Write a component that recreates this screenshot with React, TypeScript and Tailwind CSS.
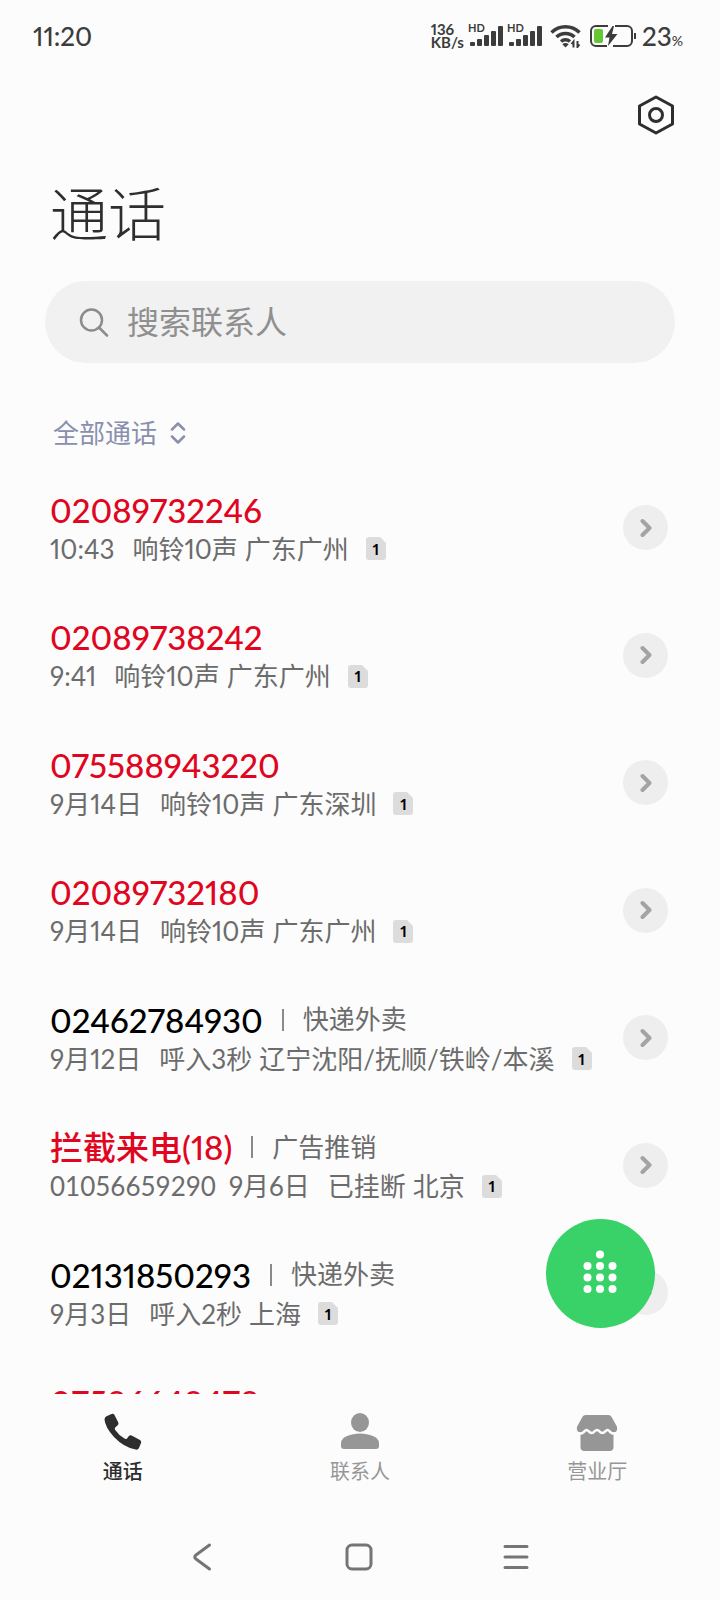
import React, { useState } from "react";

type Call = {
  title: string;
  missed?: boolean;
  tag?: string;
  number?: string;
  time: string;
  status: string;
  place: string;
};

const calls: Call[] = [
  { title: "02089732246", missed: true, time: "10:43", status: "响铃10声", place: "广东广州" },
  { title: "02089738242", missed: true, time: "9:41", status: "响铃10声", place: "广东广州" },
  { title: "075588943220", missed: true, time: "9月14日", status: "响铃10声", place: "广东深圳" },
  { title: "02089732180", missed: true, time: "9月14日", status: "响铃10声", place: "广东广州" },
  { title: "02462784930", tag: "快递外卖", time: "9月12日", status: "呼入3秒", place: "辽宁沈阳/抚顺/铁岭/本溪" },
  { title: "拦截来电(18)", missed: true, tag: "广告推销", number: "01056659290", time: "9月6日", status: "已挂断", place: "北京" },
  { title: "02131850293", tag: "快递外卖", time: "9月3日", status: "呼入2秒", place: "上海" },
  { title: "07586648478", missed: true, time: "", status: "", place: "" },
];

const Signal = () => (
  <span className="relative block h-6 w-[33px]">
    <span className="absolute -top-1 -left-[2px] text-[11px] leading-4 font-bold">HD</span>
    <svg width="33" height="24" viewBox="0 0 33 24" fill="#3c3c3c">
      <rect x="0" y="18" width="5" height="4" rx="1" />
      <rect x="7" y="15" width="5" height="7" rx="1" />
      <rect x="14" y="11" width="5" height="11" rx="1" />
      <rect x="21" y="7" width="5" height="15" rx="1" />
      <rect x="28" y="2" width="5" height="20" rx="1" />
    </svg>
  </span>
);

const Wifi = () => (
  <svg className="mx-[2px]" width="32" height="24" viewBox="0 0 32 24" fill="none" stroke="#3c3c3c" strokeWidth="3.500">
    <path d="M1.500 8.500a20 20 0 0 1 28 0M6.500 13a13 13 0 0 1 18 0M11 17.500a7 7 0 0 1 9 0" />
    <path d="M12.300 20.300a5 5 0 0 1 6.400 0l-3.200 3.200z" fill="#3c3c3c" stroke="none" />
    <path d="M23.500 23.500v-6l-2 2.500M27.500 17v6l2-2.500" strokeWidth="2" />
  </svg>
);

const Battery = () => (
  <svg width="46" height="22" viewBox="0 0 46 22" fill="none" stroke="#3c3c3c" strokeWidth="2">
    <path d="M18 1H6a5 5 0 0 0-5 5v10a5 5 0 0 0 5 5h11M25 1h12a5 5 0 0 1 5 5v10a5 5 0 0 1-5 5H23" />
    <rect x="4" y="4" width="9" height="14" rx="2" fill="#64c832" stroke="none" />
    <path d="M22.500 1 15 12.500h4.500L18 21l9.500-12H22l2-8z" fill="#3c3c3c" stroke="none" />
    <path d="M45 8v6" />
  </svg>
);

const SimBadge = () => (
  <span className="relative flex h-[23px] w-5 items-center justify-center text-[16px] font-bold text-black">
    <svg className="absolute inset-0" width="20" height="23" viewBox="0 0 20 23" fill="#dcdcdc">
      <path d="M3 0h11l6 6v14a3 3 0 0 1-3 3H3a3 3 0 0 1-3-3V3a3 3 0 0 1 3-3z" />
    </svg>
    <span className="relative leading-none">1</span>
  </span>
);

const CallRow = ({ call }: { call: Call }) => (
  <li className="flex h-[127px] shrink-0 items-center justify-between pr-[52px] pl-[50px] even:h-[128px]">
    <div className="pt-[2px]">
      <div className="flex h-10 items-center gap-[19px] whitespace-nowrap">
        <span className={`text-[33px] leading-10 font-medium ${call.missed ? "text-[#e0061f]" : "text-black"}`}>
          {call.title}
        </span>
        {call.tag && (
          <>
            <span className="h-[22px] w-[2px] bg-[#8a8a8a]" />
            <span className="text-[26px] text-[#6c6c6c]">{call.tag}</span>
          </>
        )}
      </div>
      <div className="flex h-[38px] items-center text-[26px] leading-[38px] whitespace-nowrap text-[#6c6c6c]">
        {call.number && <span className="mr-[13px] tabular-nums">{call.number}</span>}
        {call.time && (
          <>
            <span className="mr-[18px]">{call.time}</span>
            <span className="mr-[7px]">{call.status}</span>
            <span className="mr-[17px]">{call.place}</span>
            <SimBadge />
          </>
        )}
      </div>
    </div>
    <button
      aria-label={`${call.title} 详情`}
      className="flex size-[45px] items-center justify-center rounded-full bg-[#eeeeee]"
    >
      <svg width="12" height="20" viewBox="0 0 12 20" fill="none" stroke="#a3a3a3" strokeWidth="4" strokeLinecap="round" strokeLinejoin="round">
        <path d="M2.500 3 9.500 10l-7 7" />
      </svg>
    </button>
  </li>
);

const tabs = [
  {
    name: "通话",
    icon: (
      <svg width="40" height="40" viewBox="0 0 40 40" fill="currentColor">
        <path d="M3.500 4.200 8.500 2q2-.7 3 1l3.800 7.500q.7 1.600-.6 2.800l-2.500 2.200q-.9 1 0 2.500 3.800 5.500 9.300 8.600 1.600.8 2.500-.2l1.900-2.400q1.200-1.200 2.700-.5l8.400 4.500q1.700 1 1.100 2.800l-2 5q-1 2.200-3.400 1.800Q21 35.500 11 25 2 15 1.500 7.500q0-2.400 2-3.300z" />
      </svg>
    ),
  },
  {
    name: "联系人",
    icon: (
      <svg width="40" height="40" viewBox="0 0 40 40" fill="currentColor">
        <ellipse cx="20" cy="10.500" rx="9" ry="9.500" />
        <path d="M1 31c0-6 10-9.500 19-9.500S39 25 39 31v3a3 3 0 0 1-3 3H4a3 3 0 0 1-3-3z" />
      </svg>
    ),
  },
  {
    name: "营业厅",
    icon: (
      <svg width="42" height="40" viewBox="0 0 42 40" fill="currentColor">
        <path d="M9.500 3h23q2 0 3 1.800l5.500 10q1 5.500-3.500 5.700V35q0 4-4 4h-25q-4 0-4-4V20.500Q0 20.300 1 14.800l5.500-10q1-1.800 3-1.800z" />
        <path
          d="M2 21.500q4.500.5 6.500-2.300 2-2.500 4 0 3.200 3.600 6.200 0 2.300-2.500 4.600 0 3 3.600 6.200 0 2-2.500 4 0 2 2.800 6.500 2.300"
          fill="none"
          stroke="#fcfcfc"
          strokeWidth="2.500"
        />
      </svg>
    ),
  },
];

const App = () => {
  const [query, setQuery] = useState("");
  const [active, setActive] = useState("通话");

  return (
    <div className="flex h-screen flex-col overflow-hidden bg-[#fcfcfc] font-[Lato,'Noto_Sans_CJK_SC',sans-serif] proportional-nums">
      <div className="flex h-[72px] shrink-0 items-center justify-between pr-[37px] pl-[33px] text-[#3c3c3c]">
        <span className="text-[26px] font-medium">11:20</span>
        <div className="flex items-center gap-[6px]">
          <span className="flex flex-col text-[15px] leading-[13px] font-bold">
            <span>136</span>
            <span>KB/s</span>
          </span>
          <Signal />
          <Signal />
          <Wifi />
          <Battery />
          <span className="flex items-baseline text-[26px] font-medium">
            23<span className="text-[14px]">%</span>
          </span>
        </div>
      </div>

      <header className="shrink-0">
        <div className="flex h-[86px] items-center justify-end pr-[44px]">
          <button aria-label="设置">
            <svg width="40" height="42" viewBox="0 0 40 42" fill="none" stroke="#2e2e2e" strokeWidth="3" strokeLinejoin="round">
              <path d="M20 3 36.500 12v18L20 39 3.500 30V12z" />
              <circle cx="20" cy="21" r="6.500" />
            </svg>
          </button>
        </div>
        <h1 className="px-[50px] pt-[16px] text-[58px] leading-[80px] font-light text-[#2e2e2e]">通话</h1>
        <div className="px-[45px] pt-[27px]">
          <label className="flex h-[82px] items-center gap-[18px] rounded-full bg-[#f1f1f1] pb-px pl-[34px]">
            <svg width="30" height="30" viewBox="0 0 30 30" fill="none" stroke="#8c8c8c" strokeWidth="2.500" strokeLinecap="round">
              <circle cx="12.500" cy="13" r="10.500" />
              <path d="m20 20.500 8 8" />
            </svg>
            <input
              type="text"
              aria-label="搜索联系人"
              placeholder="搜索联系人"
              value={query}
              onChange={(e) => setQuery(e.target.value)}
              className="min-w-0 flex-1 bg-transparent text-[32px] leading-10 outline-none placeholder:text-[#8f8f8f]"
            />
          </label>
        </div>
        <button className="mt-[50px] mb-[11px] ml-[53px] flex h-10 items-center gap-[13px] text-[26px] text-[#8a8fae]">
          全部通话
          <svg width="16" height="22" viewBox="0 0 16 22" fill="none" stroke="currentColor" strokeWidth="2.500" strokeLinecap="round" strokeLinejoin="round">
            <path d="m2 7.500 6-6 6 6M2 14.500l6 6 6-6" />
          </svg>
        </button>
      </header>

      <main className="relative min-h-0 flex-1">
        <ul className="flex h-full flex-col overflow-hidden">
          {calls.map((call) => (
            <CallRow key={call.title} call={call} />
          ))}
        </ul>
        <button
          aria-label="拨号盘"
          className="absolute right-[65px] bottom-[66px] flex size-[109px] items-center justify-center rounded-full bg-[#39d268] pr-px pb-[3px]"
        >
          <svg width="34" height="44" viewBox="0 0 34 44" fill="white">
            <circle cx="17" cy="4.500" r="4" />
            {[16, 27.5, 39].map((y) =>
              [4.5, 17, 29.5].map((x) => <circle key={`${x}-${y}`} cx={x} cy={y} r="4" />)
            )}
          </svg>
        </button>
      </main>

      <nav className="grid h-[118px] shrink-0 grid-cols-3 px-1">
        {tabs.map((tab) => (
          <button
            key={tab.name}
            onClick={() => setActive(tab.name)}
            className={`flex flex-col items-center gap-[5px] pt-[18px] text-[20px] leading-7 ${
              active === tab.name ? "font-medium text-[#2e2e2e]" : "text-[#969696]"
            }`}
          >
            {tab.icon}
            {tab.name}
          </button>
        ))}
      </nav>

      <div className="flex h-[88px] shrink-0 items-center justify-center pt-[2px] pr-[2px]">
        <button aria-label="返回" className="flex w-[157px] justify-center">
          <svg width="20" height="30" viewBox="0 0 20 30" fill="none" stroke="#757575" strokeWidth="3" strokeLinecap="round" strokeLinejoin="round">
            <path d="M17.500 3 4 13q-2.500 2 0 4l13.500 10" />
          </svg>
        </button>
        <button aria-label="主页" className="flex w-[157px] justify-center">
          <svg width="28" height="28" viewBox="0 0 28 28" fill="none" stroke="#757575" strokeWidth="3">
            <rect x="2" y="2" width="24" height="24" rx="5" />
          </svg>
        </button>
        <button aria-label="最近任务" className="flex w-[157px] justify-center">
          <svg width="28" height="28" viewBox="0 0 28 28" fill="none" stroke="#757575" strokeWidth="3" strokeLinecap="round">
            <path d="M3 3.500h22M3 14h22M3 24.500h22" />
          </svg>
        </button>
      </div>
    </div>
  );
};

export default App;
